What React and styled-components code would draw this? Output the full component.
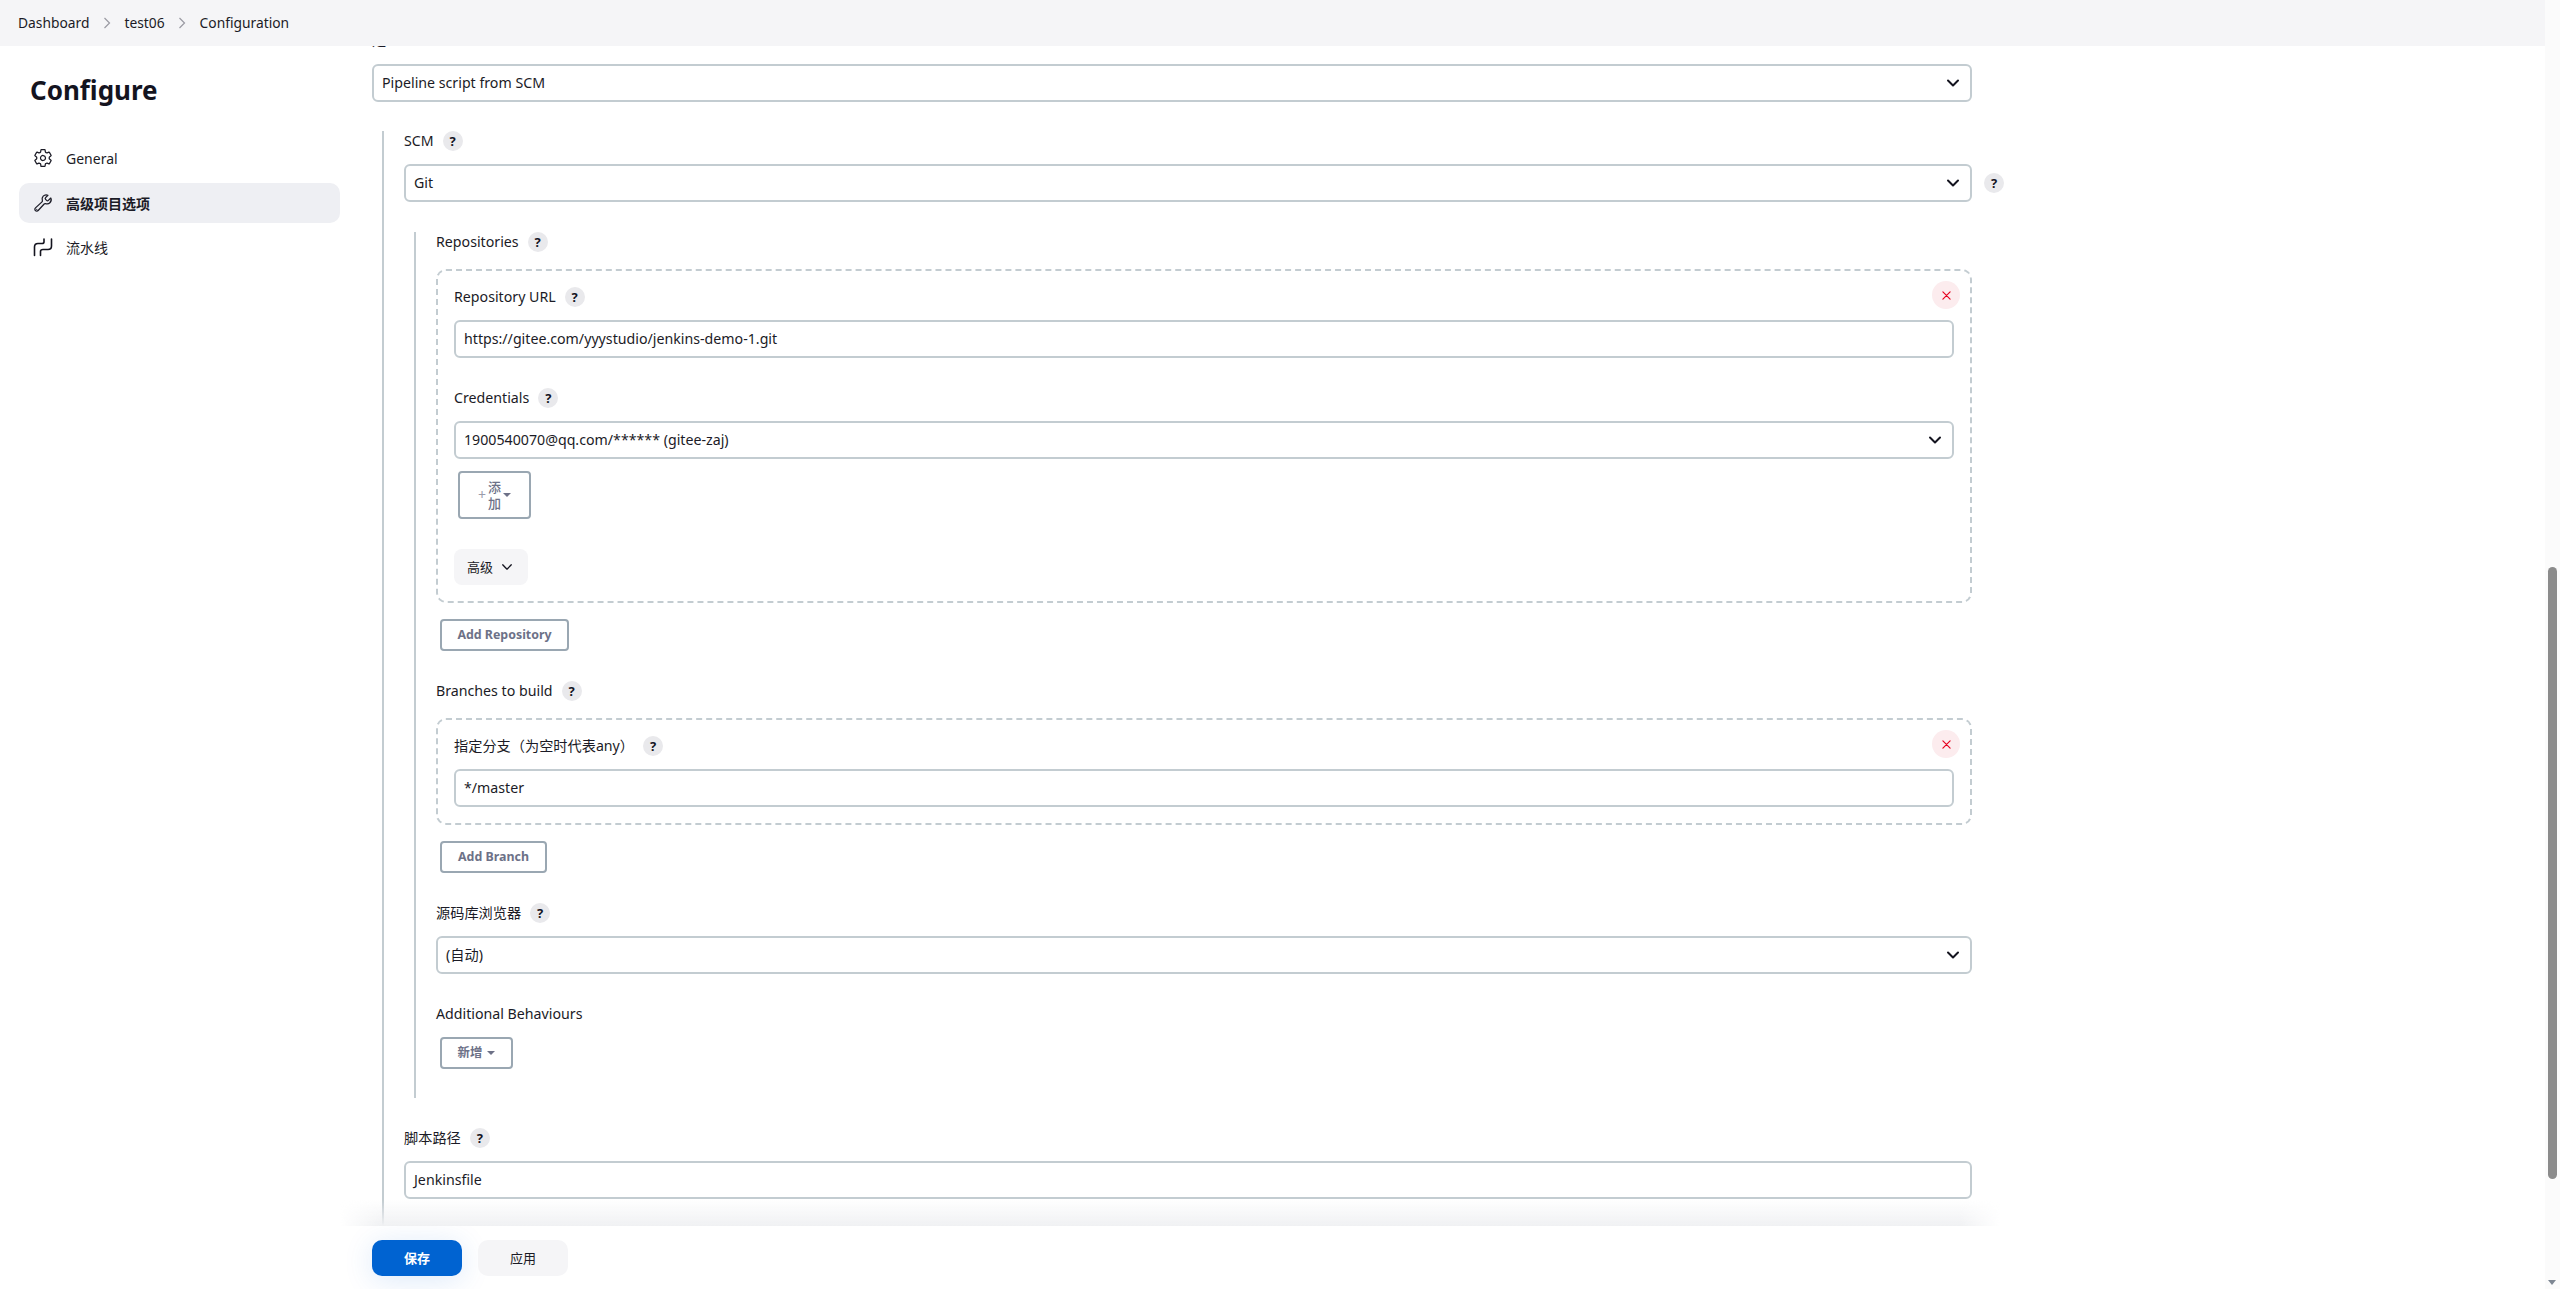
import React from 'react';
import styled, { createGlobalStyle } from 'styled-components';
import { IoSettingsOutline, IoBuildOutline } from 'react-icons/io5';

const GlobalStyle = createGlobalStyle`
  html, body {
    margin: 0;
    padding: 0;
    height: 100%;
    overflow: hidden;
    background: #fff;
  }
  body {
    font-family: "Noto Sans", "Noto Sans CJK SC", sans-serif;
    font-size: 14px;
    color: #1b1b26;
  }
`
const Page = styled.div`
  display: flex;
  height: 1289px;
  overflow: hidden;
`
const Viewport = styled.div`
  position: relative;
  flex: 1;
  min-width: 0;
  overflow: hidden;
`
const TopBar = styled.nav`
  position: relative;
  z-index: 3;
  display: flex;
  align-items: center;
  height: 46px;
  padding-left: 18px;
  background: #f5f5f7;
`
const Crumb = styled.span`
  font-size: 13.8px;
  line-height: 20px;
`
const CrumbSep = styled.svg`
  width: 8px;
  height: 12px;
  margin: 0 13.5px;
  fill: none;
  stroke: #9a9aa2;
  stroke-width: 1.2;
`
const Columns = styled.div`
  display: flex;
  align-items: flex-start;
`
const Sidebar = styled.aside`
  flex: none;
  width: 321px;
  margin-left: 19px;
`
const PageTitle = styled.h1`
  margin: 0 0 28px 11px;
  padding-top: 24px;
  font-size: 26px;
  font-weight: 700;
  line-height: 40px;
  color: #14141f;
`
const SideItem = styled.a`
  display: flex;
  align-items: center;
  gap: 13px;
  height: 40px;
  padding-left: 14px;
  margin-top: ${p => p.$gap || 0}px;
  border-radius: 10px;
  background: ${p => (p.$active ? '#eeeff3' : 'transparent')};
  font-size: 14px;
  font-weight: ${p => (p.$active ? 600 : 400)};
  svg {
    flex: none;
    width: 20px;
    height: 20px;
  }
`
const Form = styled.main`
  flex: none;
  width: 1600px;
  margin-left: 32px;
  margin-top: -16px;
`
const Nested = styled.section`
  margin: ${p => p.$top || 0}px 0 0 10px;
  padding: 0 0 ${p => p.$bottom || 0}px 20px;
  border-left: 2px solid #c3ccd1;
`
const Label = styled.div`
  display: flex;
  align-items: center;
  gap: 9px;
  height: 20px;
  margin-top: ${p => p.$top || 0}px;
  font-size: 14.2px;
  line-height: 20px;
`
const Help = styled.span`
  display: inline-flex;
  flex: none;
  align-items: center;
  justify-content: center;
  width: 20px;
  height: 20px;
  border-radius: 50%;
  background: #e9e9ec;
  font-size: 13px;
  font-weight: 700;
  color: #14141f;
`
const FieldBox = styled.div`
  display: flex;
  align-items: center;
  justify-content: space-between;
  box-sizing: border-box;
  height: 38px;
  margin-top: ${p => p.$top === undefined ? 13 : p.$top}px;
  padding: 0 10px 2px 8px;
  border: 2px solid #c3ccd1;
  border-radius: 6px;
  background: #fff;
  font-size: 14.2px;
  svg {
    flex: none;
    width: 14px;
    height: 14px;
    margin-top: 2px;
    fill: none;
    stroke: #14141f;
    stroke-width: 2;
    stroke-linecap: round;
    stroke-linejoin: round;
  }
`
const FieldRow = styled.div`
  display: flex;
  align-items: center;
  gap: 12px;
  margin: 13px -32px 0 0;
  ${FieldBox} {
    flex: 1;
    margin-top: 0;
  }
`
const DashedCard = styled.div`
  position: relative;
  margin-top: 17px;
  padding: 16px;
  border: 2px dashed #c3ccd1;
  border-radius: 10px;
`
const DeleteBtn = styled.button`
  position: absolute;
  top: 10px;
  right: 10px;
  display: flex;
  align-items: center;
  justify-content: center;
  width: 28px;
  height: 28px;
  padding: 0;
  border: 0;
  border-radius: 50%;
  background: #fcecee;
  svg {
    width: 9px;
    height: 9px;
    fill: none;
    stroke: #e6001f;
    stroke-width: 1.3;
    stroke-linecap: round;
  }
`
const OutlineBtn = styled.button`
  display: flex;
  align-items: center;
  justify-content: center;
  gap: ${p => p.$gap || 0}px;
  box-sizing: border-box;
  width: ${p => p.$w}px;
  height: ${p => p.$h || 32}px;
  margin: ${p => p.$top === undefined ? 16 : p.$top}px 0 0 4px;
  padding: 0 0 1px;
  border: 2px solid #9aa7b2;
  border-radius: 4px;
  background: #fff;
  font-family: inherit;
  font-size: 12.4px;
  font-weight: 700;
  line-height: 20px;
  color: #6d7187;
`
const Stacked = styled.span`
  width: 13px;
  font-size: 13px;
  font-weight: 500;
  line-height: 16px;
  text-align: center;
`
const Caret = styled.i`
  display: inline-block;
  width: 0;
  height: 0;
  border-left: 4px solid transparent;
  border-right: 4px solid transparent;
  border-top: 4px solid #6d7187;
`
const PlusMark = styled.span`
  font-size: 14px;
  font-weight: 400;
  color: #9a9cab;
`
const AdvancedBtn = styled.button`
  display: flex;
  align-items: center;
  gap: 8px;
  height: 36px;
  width: 74px;
  margin-top: 30px;
  padding: 0 0 2px 13px;
  border: 0;
  border-radius: 8px;
  background: #f5f5f7;
  font-family: inherit;
  font-size: 13px;
  color: #1b1b26;
  svg {
    width: 12px;
    height: 12px;
    margin-top: 2px;
    fill: none;
    stroke: #14141f;
    stroke-width: 1.6;
    stroke-linecap: round;
    stroke-linejoin: round;
  }
`
const BottomBar = styled.footer`
  position: absolute;
  z-index: 2;
  left: 0;
  right: 0;
  bottom: 0;
  display: flex;
  gap: 16px;
  height: 63px;
  box-sizing: border-box;
  padding: 14px 0 0 372px;
  background: #fff;
  &::before {
    content: '';
    position: absolute;
    left: 340px;
    width: 1660px;
    top: -26px;
    height: 26px;
    background: linear-gradient(to bottom, rgba(240, 241, 243, 0), rgba(240, 241, 243, 1));
    -webkit-mask-image: linear-gradient(to right, transparent, #000 40px, #000 1620px, transparent);
    mask-image: linear-gradient(to right, transparent, #000 40px, #000 1620px, transparent);
  }
`
const ActionBtn = styled.button`
  width: 90px;
  height: 36px;
  padding: 0 0 2px;
  border: 0;
  border-radius: 10px;
  font-family: inherit;
  font-size: 13px;
  font-weight: ${p => (p.$primary ? 700 : 400)};
  background: ${p => (p.$primary ? '#0063d1' : '#f5f5f7')};
  color: ${p => (p.$primary ? '#fff' : '#1b1b26')};
  box-shadow: ${p => (p.$primary ? '0 4px 30px rgba(0, 99, 209, 0.14)' : 'none')};
`
const ScrollTrack = styled.div`
  position: relative;
  flex: none;
  width: 15px;
  background: #fbfbfb;
`
const ScrollThumb = styled.div`
  position: absolute;
  left: 3px;
  top: 567px;
  width: 9px;
  height: 612px;
  border-radius: 5px;
  background: #8b8b8b;
`
const ScrollArrow = styled.i`
  position: absolute;
  left: 3px;
  bottom: 4px;
  border-left: 4.5px solid transparent;
  border-right: 4.5px solid transparent;
  border-top: 5px solid #7e8793;
`

const Chevron = () => (
  <svg viewBox="0 0 14 14"><path d="M2 4.5 L7 9.5 L12 4.5" /></svg>
)

const PipelineIcon = () => (
  <svg viewBox="0 0 20 20" fill="none" stroke="#14141f" strokeWidth="1.6" strokeLinecap="round" strokeLinejoin="round">
    <path d="M1.5 18.5 V10 Q1.5 6.5 5 6.5 H9 Q11 6.5 11 5 V2" />
    <path d="M7.5 18.5 V14.5 Q7.5 12.5 10 12.5 H15 Q18.5 12.5 18.5 9 V2" />
  </svg>
)

const Select = ({ children, top }) => (
  <FieldBox $top={top}>
    <span>{children}</span>
    <Chevron />
  </FieldBox>
)

const HelpMark = () => <Help>?</Help>

const RemoveButton = () => (
  <DeleteBtn aria-label="delete">
    <svg viewBox="0 0 10 10"><path d="M1 1 L9 9 M9 1 L1 9" /></svg>
  </DeleteBtn>
)

const App = () => (
  <Page>
    <GlobalStyle />
    <Viewport>
      <TopBar>
        <Crumb>Dashboard</Crumb>
        <CrumbSep viewBox="0 0 8 12"><path d="M1.5 1 L6.5 6 L1.5 11" /></CrumbSep>
        <Crumb>test06</Crumb>
        <CrumbSep viewBox="0 0 8 12"><path d="M1.5 1 L6.5 6 L1.5 11" /></CrumbSep>
        <Crumb>Configuration</Crumb>
      </TopBar>
      <Columns>
        <Sidebar>
          <PageTitle>Configure</PageTitle>
          <SideItem><IoSettingsOutline />General</SideItem>
          <SideItem $active $gap={5}><IoBuildOutline />高级项目选项</SideItem>
          <SideItem $gap={4}><PipelineIcon />流水线</SideItem>
        </Sidebar>
        <Form>
          <Label>定义</Label>
          <Select top={14}>Pipeline script from SCM</Select>
          <Nested $top={29}>
            <Label>SCM <HelpMark /></Label>
            <FieldRow>
              <Select>Git</Select>
              <HelpMark />
            </FieldRow>
            <Nested $top={30} $bottom={29}>
              <Label>Repositories <HelpMark /></Label>
              <DashedCard>
                <RemoveButton />
                <Label>Repository URL <HelpMark /></Label>
                <FieldBox>https://gitee.com/yyystudio/jenkins-demo-1.git</FieldBox>
                <Label $top={30}>Credentials <HelpMark /></Label>
                <Select>1900540070@qq.com/****** (gitee-zaj)</Select>
                <OutlineBtn $w={73} $h={48} $top={12} $gap={2}>
                  <PlusMark>+</PlusMark>
                  <Stacked>添加</Stacked>
                  <Caret />
                </OutlineBtn>
                <AdvancedBtn>高级 <Chevron /></AdvancedBtn>
              </DashedCard>
              <OutlineBtn $w={129}>Add Repository</OutlineBtn>
              <Label $top={30}>Branches to build <HelpMark /></Label>
              <DashedCard>
                <RemoveButton />
                <Label>指定分支（为空时代表any） <HelpMark /></Label>
                <FieldBox>*/master</FieldBox>
              </DashedCard>
              <OutlineBtn $w={107}>Add Branch</OutlineBtn>
              <Label $top={30}>源码库浏览器 <HelpMark /></Label>
              <Select>(自动)</Select>
              <Label $top={30}>Additional Behaviours</Label>
              <OutlineBtn $w={73} $top={13} $gap={5}>新增 <Caret /></OutlineBtn>
            </Nested>
            <Label $top={30}>脚本路径 <HelpMark /></Label>
            <FieldBox>Jenkinsfile</FieldBox>
            <Label $top={60} />
          </Nested>
        </Form>
      </Columns>
      <BottomBar>
        <ActionBtn $primary>保存</ActionBtn>
        <ActionBtn>应用</ActionBtn>
      </BottomBar>
    </Viewport>
    <ScrollTrack>
      <ScrollThumb />
      <ScrollArrow />
    </ScrollTrack>
  </Page>
);

export default App;
